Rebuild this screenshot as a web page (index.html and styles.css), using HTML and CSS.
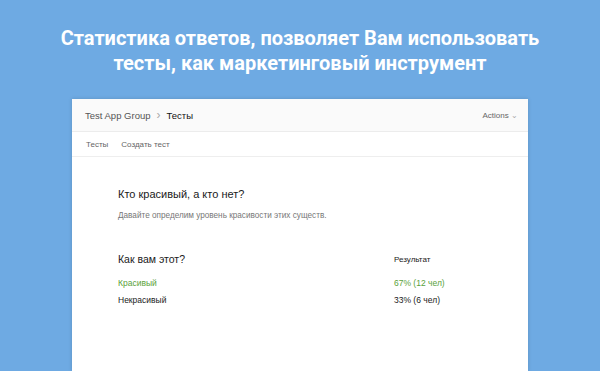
FILE: index.html
```html
<!DOCTYPE html>
<html lang="ru">
<head>
    <meta charset="UTF-8">
    <title>Статистика ответов</title>
    <link rel="stylesheet" href="styles.css">
</head>
<body>
    <div class="page">
        <h1 class="headline">Статистика ответов, позволяет Вам использовать<br>тесты, как маркетинговый инструмент</h1>

        <div class="window">
            <!-- Breadcrumbs -->
            <header class="window-head">
                <div class="crumbs">
                    <span class="crumb">Test App Group</span>
                    <span class="crumb-sep">›</span>
                    <span class="crumb current">Тесты</span>
                </div>
                <div class="actions">Actions <span class="caret">⌄</span></div>
            </header>

            <!-- Tabs -->
            <nav class="tabs">
                <a class="tab">Тесты</a>
                <a class="tab">Создать тест</a>
            </nav>

            <!-- Test stats -->
            <section class="content">
                <h2 class="test-title">Кто красивый, а кто нет?</h2>
                <p class="test-desc">Давайте определим уровень красивости этих существ.</p>

                <div class="question">
                    <div class="row row-head">
                        <span class="q-title">Как вам этот?</span>
                        <span class="col-result">Результат</span>
                    </div>
                    <div class="row answer best">
                        <span>Красивый</span>
                        <span class="col-result">67% (12 чел)</span>
                    </div>
                    <div class="row answer">
                        <span>Некрасивый</span>
                        <span class="col-result">33% (6 чел)</span>
                    </div>
                </div>
            </section>
        </div>
    </div>
</body>
</html>
```

FILE: styles.css
```css
/* Page */
body {
    margin: 0;
    height: 100vh;
    background-color: #6eaae3;
    font-family: 'Liberation Sans', Arial, sans-serif;
    color: #222;
    overflow: hidden;
}

.page {
    display: flex;
    flex-direction: column;
    align-items: center;
    height: 100%;
    padding-top: 26px;
    box-sizing: border-box;
}

.headline {
    margin: 0 0 23px;
    font-family: Roboto, 'Noto Sans', sans-serif;
    font-size: 20px;
    line-height: 25px;
    font-weight: 700;
    color: #fff;
    text-align: center;
}

/* App window */
.window {
    flex: 1;
    width: 456px;
    background-color: #fff;
    box-shadow: 0 0 4px rgba(0, 0, 0, 0.15);
}

.window-head {
    display: flex;
    justify-content: space-between;
    align-items: center;
    height: 32px;
    padding: 0 10px 0 13px;
    background-color: #fafafa;
    border-bottom: 1px solid #ececec;
    font-size: 9.5px;
}

.crumbs {
    display: flex;
    align-items: center;
    gap: 6px;
}

.crumb {
    color: #555;
}

.crumb-sep {
    color: #aaa;
    font-size: 12px;
}

.crumb.current {
    color: #111;
}

.actions {
    color: #666;
    font-size: 8px;
}

.caret {
    color: #aaa;
    font-size: 8px;
}

.tabs {
    display: flex;
    gap: 13px;
    height: 24px;
    align-items: center;
    padding: 0 14px;
    border-bottom: 1px solid #eee;
    font-size: 8px;
}

.tab {
    color: #666;
}

/* Content */
.content {
    padding: 31px 46px 0;
}

.test-title {
    margin: 0;
    font-size: 11px;
    font-weight: 400;
    color: #1a1a1a;
}

.test-desc {
    margin: 11px 0 0;
    font-size: 8.2px;
    color: #777;
}

.question {
    margin-top: 31px;
}

.row {
    display: flex;
    align-items: center;
    font-size: 8.5px;
    color: #1a1a1a;
}

.col-result {
    margin-left: auto;
    width: 88px;
}

.row-head {
    height: 16px;
}

.q-title {
    font-size: 10.5px;
}

.row-head .col-result {
    font-size: 8px;
}

.answer {
    height: 17px;
}

.row-head + .answer {
    margin-top: 7px;
}

.best {
    color: #5aa23a;
}
```
